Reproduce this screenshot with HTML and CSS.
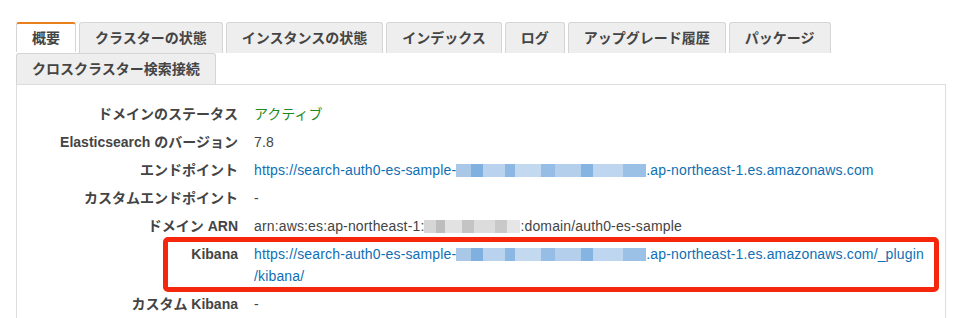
FILE: index.html
```html
<!DOCTYPE html>
<html lang="ja">
<head>
    <meta charset="UTF-8">
    <title>ドメインの概要</title>
    <link rel="stylesheet" href="styles.css">
</head>
<body>

<div class="page">
    <ul class="tabs">
        <li class="tab active">概要</li>
        <li class="tab">クラスターの状態</li>
        <li class="tab">インスタンスの状態</li>
        <li class="tab">インデックス</li>
        <li class="tab">ログ</li>
        <li class="tab">アップグレード履歴</li>
        <li class="tab">パッケージ</li>
        <li class="tab">クロスクラスター検索接続</li>
    </ul>

    <div class="panel">
        <div class="row">
            <span class="label">ドメインのステータス</span>
            <span class="value status">アクティブ</span>
        </div>
        <div class="row">
            <span class="label">Elasticsearch のバージョン</span>
            <span class="value">7.8</span>
        </div>
        <div class="row">
            <span class="label">エンドポイント</span>
            <span class="value"><a href="#">https://search-auth0-es-sample-<span class="blur blue"></span>.ap-northeast-1.es.amazonaws.com</a></span>
        </div>
        <div class="row">
            <span class="label">カスタムエンドポイント</span>
            <span class="value">-</span>
        </div>
        <div class="row">
            <span class="label">ドメイン ARN</span>
            <span class="value">arn:aws:es:ap-northeast-1:<span class="blur gray"></span>:domain/auth0-es-sample</span>
        </div>
        <div class="row highlight">
            <span class="label">Kibana</span>
            <span class="value"><a href="#">https://search-auth0-es-sample-<span class="blur blue"></span>.ap-northeast-1.es.amazonaws.com/_plugin<wbr>/kibana/</a></span>
        </div>
        <div class="row">
            <span class="label">カスタム Kibana</span>
            <span class="value">-</span>
        </div>
    </div>
</div>

</body>
</html>
```

FILE: styles.css
```css
body {
    margin: 0;
    background: #fff;
    font-family: "Liberation Sans", Arial, "Noto Sans CJK JP", sans-serif;
    color: #444;
}
.page { padding: 22px 14px 0 16px; }

/* tabs */
.tabs {
    list-style: none;
    margin: 0;
    padding: 0;
    display: flex;
    flex-wrap: wrap;
    column-gap: 3px;
}
.tab {
    height: 31px;
    box-sizing: border-box;
    padding: 0 15px;
    border: 1px solid #d5d5d5;
    border-bottom: none;
    border-radius: 3px 3px 0 0;
    background: #eee;
    font-size: 14px;
    font-weight: bold;
    line-height: 30px;
    color: #444;
}
.tab.active {
    background: #fff;
    border-top: 2px solid #e8801d;
    line-height: 29px;
    height: 30px;
}

/* summary panel */
.panel {
    border: 1px solid #ddd;
    padding: 15px 0 20px;
    min-height: 260px;
}
.row {
    display: flex;
    padding: 3px 0;
    font-size: 14px;
    line-height: 22px;
}
.label {
    width: 221px;
    flex: none;
    margin-right: 16px;
    text-align: right;
    font-weight: bold;
    color: #444;
}
.value {
    width: 670px;
    color: #444;
    letter-spacing: 0.15px;
}
.value a {
    color: #0f6fb4;
    text-decoration: none;
}
.status { color: #1d8a1d; letter-spacing: 0; }

/* masked parts of the addresses */
.blur {
    display: inline-block;
    width: 190px;
    height: 13px;
    vertical-align: -2px;
}
.blur.blue {
    background:
        linear-gradient(90deg, #a9c8e8 0 8%, #7fb0e0 8% 14%, #b9d3ee 14% 26%, #8cb7e3 26% 31%, #c2d9f0 31% 45%, #95bde6 45% 52%, #b3cfec 52% 66%, #86b4e2 66% 72%, #bed6ef 72% 88%, #9bc1e7 88% 100%);
}
.blur.gray {
    width: 96px;
    background:
        linear-gradient(90deg, #d6d6d6 0 12%, #bdbdbd 12% 22%, #e2e2e2 22% 40%, #c4c4c4 40% 52%, #dcdcdc 52% 74%, #c9c9c9 74% 86%, #e6e6e6 86% 100%);
}

/* annotation */
.highlight { position: relative; }
.highlight::after {
    content: "";
    position: absolute;
    top: -3px;
    bottom: -2px;
    left: 146px;
    right: 6px;
    border: 5px solid #f4260b;
    border-radius: 5px;
}
```
